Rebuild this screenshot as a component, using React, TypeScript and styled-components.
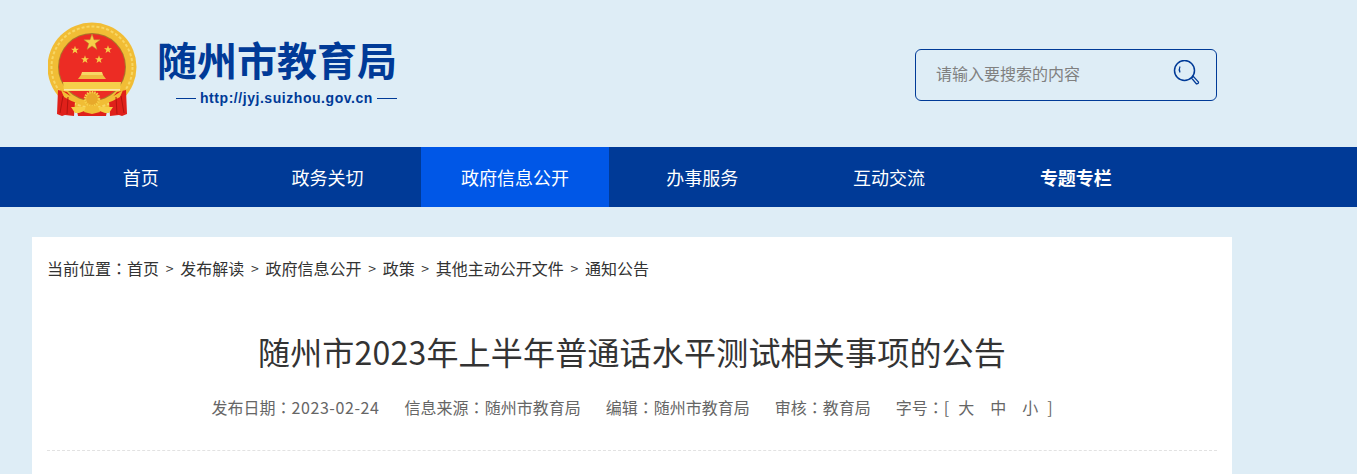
import React from "react";
import styled, { createGlobalStyle } from "styled-components";

const GlobalStyle = createGlobalStyle`
  html, body {
    margin: 0;
    padding: 0;
    height: 474px;
    overflow: hidden;
    background: #deedf6;
    font-family: "Noto Sans CJK SC", "Noto Sans", sans-serif;
  }
`;

const ScHeader = styled.header`
  height: 147px;
  box-sizing: border-box;
  width: 1200px;
  margin-left: 32px;
  padding: 22px 15px 0 16px;
  display: flex;
  justify-content: space-between;
  align-items: flex-start;
`;

const ScBrand = styled.div`
  display: flex;
  gap: 19px;
`;

const ScBrandText = styled.div`
  display: flex;
  flex-direction: column;
  align-items: flex-start;
  padding-top: 9px;
`;

const ScSiteName = styled.div`
  font-size: 40px;
  line-height: 56px;
  font-weight: 700;
  color: #003a97;
  white-space: nowrap;
`;

const ScSiteUrl = styled.div`
  display: flex;
  align-items: center;
  gap: 4px;
  margin: 1px 0 0 19px;
  font-family: "Liberation Sans", sans-serif;
  font-size: 14px;
  line-height: 20px;
  font-weight: 700;
  letter-spacing: 0.55px;
  color: #003a97;

  &::before,
  &::after {
    content: "";
    width: 20px;
    height: 1px;
    background: #003a97;
  }
`;

const ScSearch = styled.form`
  margin-top: 27px;
  width: 302px;
  height: 52px;
  box-sizing: border-box;
  border: 1px solid #003a97;
  border-radius: 6px;
  display: flex;
  align-items: center;
  padding: 0 14px 0 20px;
`;

const ScSearchInput = styled.input`
  flex: 1;
  min-width: 0;
  border: 0;
  outline: 0;
  padding: 0 0 5px;
  background: transparent;
  font: inherit;
  font-size: 16px;

  &::placeholder {
    color: #808080;
    opacity: 1;
  }
`;

const ScNav = styled.nav`
  height: 60px;
  background: #003a97;
  display: flex;
  padding-left: 47.3px;
`;

const ScNavItem = styled.a<{ $active?: boolean; $strong?: boolean }>`
  width: ${(p) => (p.$active ? "188px" : "186.8px")};
  display: flex;
  align-items: center;
  justify-content: center;
  color: #fff;
  font-size: 18px;
  font-weight: ${(p) => (p.$strong ? 700 : 400)};
  background: ${(p) => (p.$active ? "#0057e7" : "transparent")};
`;

const ScCard = styled.main`
  width: 1200px;
  box-sizing: border-box;
  margin: 30px 0 0 32px;
  height: 237px;
  background: #fff;
  padding: 19px 15px 0;
`;

const ScCrumbs = styled.div`
  display: flex;
  align-items: center;
  font-size: 16px;
  line-height: 24px;
  color: #333;
`;

const ScCrumbSep = styled.span`
  width: 21.2px;
  text-align: center;
  font-size: 14px;
`;

const ScColon = styled.span`
  font-family: "Noto Sans CJK TC", sans-serif;
`;

const ScTitle = styled.h1`
  margin: 48px 0 0;
  font-size: 32px;
  line-height: 46px;
  font-weight: 400;
  letter-spacing: 0.2px;
  color: #333;
  text-align: center;
`;

const ScMeta = styled.div`
  margin-top: 21px;
  padding-bottom: 31px;
  border-bottom: 1px dashed #e2e2e2;
  display: flex;
  justify-content: center;
  gap: 25px;
  font-size: 16px;
  line-height: 24px;
  color: #666;
`;

const ScDate = styled.span`
  letter-spacing: 0.6px;
`;

const ScFontSizes = styled.span`
  margin: 0 9px;
  word-spacing: 12.4px;
`;

const crumbs = ["首页", "发布解读", "政府信息公开", "政策", "其他主动公开文件", "通知公告"];

const navItems = [
  { label: "首页" },
  { label: "政务关切" },
  { label: "政府信息公开", active: true },
  { label: "办事服务" },
  { label: "互动交流" },
  { label: "专题专栏", strong: true },
];

const star = (cx: number, cy: number, r: number) => {
  const pts: string[] = [];
  for (let i = 0; i < 10; i++) {
    const rad = i % 2 === 0 ? r : r * 0.4;
    const a = (Math.PI / 5) * i - Math.PI / 2;
    pts.push(`${(cx + rad * Math.cos(a)).toFixed(2)},${(cy + rad * Math.sin(a)).toFixed(2)}`);
  }
  return pts.join(" ");
};

const Emblem = () => (
  <svg width="90" height="94" viewBox="18 12 90 94">
    <circle cx="62" cy="57" r="44.500" fill="#f1bd35" />
    <circle cx="62" cy="57" r="40.500" fill="none" stroke="#f8d765" strokeWidth="2" strokeDasharray="3 2" />
    <circle cx="62" cy="57" r="34" fill="#a9762a" />
    <circle cx="62" cy="57" r="33" fill="#ec2c24" />
    <polygon points={star(62, 32.500, 8.500)} fill="#f6cf48" stroke="#b88a2c" strokeWidth="0.500" />
    <polygon points={star(45, 40, 4.200)} fill="#f6cf48" />
    <polygon points={star(78, 39.500, 4.200)} fill="#f6cf48" />
    <polygon points={star(55, 49.500, 4.200)} fill="#f6cf48" />
    <polygon points={star(69, 49.500, 4.200)} fill="#f6cf48" />
    <path d="M52 62h20l1 3h-22z" fill="#f8d765" />
    <path d="M51 65h22l3 4h-28z" fill="#efbd3f" />
    <path d="M33 72h58l-1 9h-56z" fill="#f6d04a" />
    <path d="M34 79h56v1.500h-56z" fill="#fbe9a8" />
    <path d="M28 80l9 2 8 9-1 15-9-1-3 1-5-2z" fill="#e0201a" />
    <path d="M96 80l-9 2-8 9 1 15 9-1 3 1 5-2z" fill="#e0201a" />
    <path d="M47 101h30l-1 5h-28z" fill="#e0201a" />
    <path d="M31 80q31 23 62 0l-3 7q-28 17-56 0z" fill="#f1bd35" />
    <circle cx="62" cy="89" r="7" fill="#e8a92a" stroke="#f6cf48" strokeWidth="2.500" strokeDasharray="1.500 1" />
    <path d="M41 97l14 0 2 3-8 3-4 0zM83 97l-14 0-2 3 8 3 4 0z" fill="#f6cf48" />
    <path d="M56 96h12l2 6-8 2-8-2z" fill="#f1bd35" />
    <path d="M33 86l-3 17M38 87l-1 17M91 86l3 17M86 87l1 17" stroke="#b3140f" strokeWidth="1" fill="none" />
  </svg>
);

const SearchIcon = () => (
  <svg width="30" height="30" viewBox="0 0 30 30" fill="none" stroke="#003a97">
    <circle cx="12.500" cy="10.500" r="10" strokeWidth="1.500" />
    <path d="M8 6.500q-1.500 3 0 6" strokeWidth="1.200" />
    <path d="M19.500 18l2-1.500 5 5.500q.5 1.500-2 2z" strokeWidth="1.200" fill="#deedf6" />
  </svg>
);

export default function App() {
  return (
    <>
      <GlobalStyle />
      <ScHeader>
        <ScBrand>
          <Emblem />
          <ScBrandText>
            <ScSiteName>随州市教育局</ScSiteName>
            <ScSiteUrl>http://jyj.suizhou.gov.cn</ScSiteUrl>
          </ScBrandText>
        </ScBrand>
        <ScSearch>
          <ScSearchInput placeholder="请输入要搜索的内容" />
          <SearchIcon />
        </ScSearch>
      </ScHeader>
      <ScNav>
        {navItems.map((item) => (
          <ScNavItem key={item.label} $active={item.active} $strong={item.strong}>
            {item.label}
          </ScNavItem>
        ))}
      </ScNav>
      <ScCard>
        <ScCrumbs>
          当前位置<ScColon>：</ScColon>
          {crumbs.map((c, i) => (
            <React.Fragment key={c}>
              {i > 0 ? <ScCrumbSep>&gt;</ScCrumbSep> : null}
              <span>{c}</span>
            </React.Fragment>
          ))}
        </ScCrumbs>
        <ScTitle>随州市2023年上半年普通话水平测试相关事项的公告</ScTitle>
        <ScMeta>
          <span>
            发布日期<ScColon>：</ScColon>
            <ScDate>2023-02-24</ScDate>
          </span>
          <span>
            信息来源<ScColon>：</ScColon>随州市教育局
          </span>
          <span>
            编辑<ScColon>：</ScColon>随州市教育局
          </span>
          <span>
            审核<ScColon>：</ScColon>教育局
          </span>
          <span>
            字号<ScColon>：</ScColon>[<ScFontSizes>大 中 小</ScFontSizes>]
          </span>
        </ScMeta>
      </ScCard>
    </>
  );
}
